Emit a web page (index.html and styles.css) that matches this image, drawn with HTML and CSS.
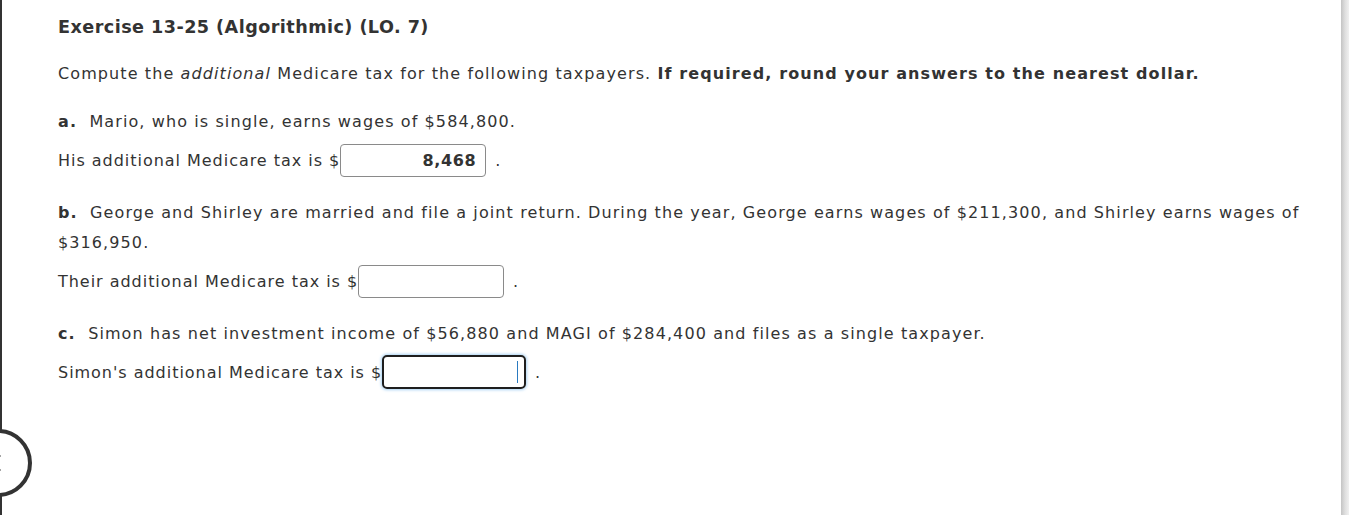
FILE: index.html
```html
<!DOCTYPE html>
<html>
<head>
<meta charset="utf-8">
<link rel="stylesheet" href="styles.css">
</head>
<body>
<div class="frame">
  <div class="content">
    <h1 class="title">Exercise 13-25 (Algorithmic) (LO. 7)</h1>
    <p class="intro">Compute the <i>additional</i> Medicare tax for the following taxpayers. <b>If required, round your answers to the nearest dollar.</b></p>

    <p class="q"><b>a.</b>&nbsp; Mario, who is single, earns wages of $584,800.</p>
    <div class="ans">His additional Medicare tax is $<span class="box filled">8,468</span><span class="dot">.</span></div>

    <p class="q"><b>b.</b>&nbsp; George and Shirley are married and file a joint return. During the year, George earns wages of $211,300, and Shirley earns wages of $316,950.</p>
    <div class="ans">Their additional Medicare tax is $<span class="box"></span><span class="dot">.</span></div>

    <p class="q"><b>c.</b>&nbsp; Simon has net investment income of $56,880 and MAGI of $284,400 and files as a single taxpayer.</p>
    <div class="ans">Simon's additional Medicare tax is $<span class="box focus"><span class="caret"></span></span><span class="dot">.</span></div>
  </div>
  <div class="nav-circle">
    <svg width="14" height="24" viewBox="0 0 14 24"><path d="M11 4 L3 12 L11 20" fill="none" stroke="#555" stroke-width="3"/></svg>
  </div>
  <div class="scrollshade"></div>
</div>
</body>
</html>
```
FILE: styles.css
```css
html, body {
  margin: 0;
  padding: 0;
  background: #fff;
}
body {
  font-family: "DejaVu Sans", Verdana, sans-serif;
  color: #333;
  font-size: 16px;
  letter-spacing: 1.1px;
  width: 1349px;
  height: 515px;
  overflow: hidden;
}
.frame {
  position: relative;
  height: 515px;
  border-left: 2px solid #333;
  box-sizing: border-box;
}
.content {
  padding: 12px 20px 0 56px;
}
.title {
  font-size: 17.6px;
  letter-spacing: 0.45px;
  font-weight: bold;
  margin: 0 0 17px 0;
  line-height: 30px;
}
.intro {
  margin: 0 0 18px 0;
  line-height: 30px;
}
.q {
  margin: 0 0 6px 0;
  line-height: 30px;
}
.ans {
  margin: 0 0 21px 0;
  height: 34px;
  display: flex;
  align-items: center;
  letter-spacing: 0.97px;
}
.box {
  display: inline-block;
  width: 146px;
  height: 33px;
  border: 1px solid #8a8a8a;
  border-radius: 4px;
  box-sizing: border-box;
  text-align: right;
  padding-right: 9px;
  font-weight: bold;
  letter-spacing: 0.6px;
  line-height: 31px;
  position: relative;
}
.box.focus {
  width: 144px;
  height: 34px;
  border: 2px solid #1e1e1e;
  border-radius: 5px;
  box-shadow: 0 0 3px 1px #a9d2f3;
}
.caret {
  position: absolute;
  right: 6px;
  top: 4px;
  width: 1px;
  height: 22px;
  background: #2a7ac0;
}
.dot {
  margin-left: 9px;
}
.nav-circle {
  position: absolute;
  left: -38px;
  top: 429px;
  width: 68px;
  height: 68px;
  border: 4px solid #333;
  border-radius: 50%;
  background: #fff;
  display: flex;
  align-items: center;
  justify-content: flex-end;
  padding-right: 25px;
  box-sizing: border-box;
}
.scrollshade {
  position: absolute;
  right: 0;
  top: 0;
  width: 8px;
  height: 515px;
  background: linear-gradient(to right, #c4c4c4, #dedede 50%, #f0f0f0);
}
```
